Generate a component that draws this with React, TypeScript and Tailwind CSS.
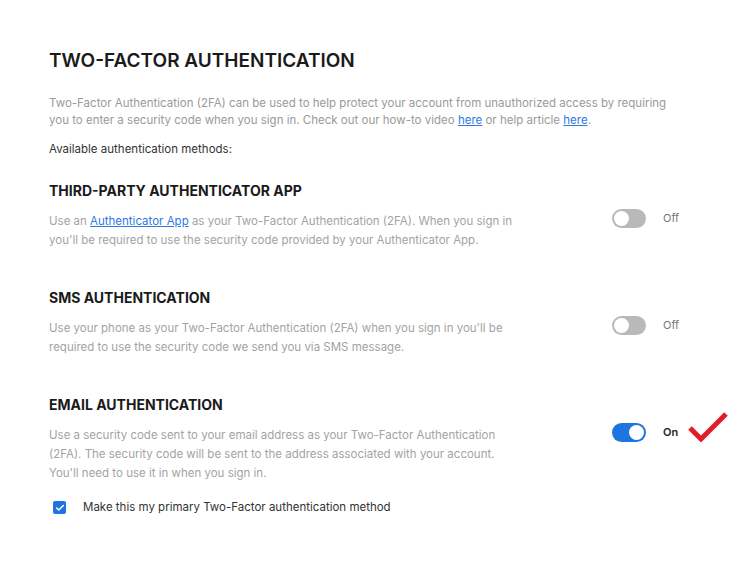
import { Check } from 'lucide-react'

type Method = {
  title: string
  desc: React.ReactNode
  on: boolean
}

function Toggle({ on }: { on: boolean }) {
  return (
    <div className="flex items-center gap-[17px]">
      <div
        className={
          on
            ? 'w-[34px] h-[19px] rounded-full bg-[#1f75e0] flex items-center justify-end px-[2px]'
            : 'w-[34px] h-[19px] rounded-full bg-[#b9b9b9] flex items-center justify-start px-[2px]'
        }
      >
        <div className="w-[15px] h-[15px] rounded-full bg-white" />
      </div>
      <span className={on ? 'text-[11px] font-semibold text-[#222]' : 'text-[11px] text-[#777]'}>
        {on ? 'On' : 'Off'}
      </span>
    </div>
  )
}

export default function App() {
  const methods: Method[] = [
    {
      title: 'THIRD-PARTY AUTHENTICATOR APP',
      desc: (
        <>
          Use an <a className="text-[#2f7ae5] underline">Authenticator App</a> as your Two-Factor Authentication (2FA). When you sign in
          you'll be required to use the security code provided by your Authenticator App.
        </>
      ),
      on: false,
    },
    {
      title: 'SMS AUTHENTICATION',
      desc: "Use your phone as your Two-Factor Authentication (2FA) when you sign in you'll be required to use the security code we send you via SMS message.",
      on: false,
    },
    {
      title: 'EMAIL AUTHENTICATION',
      desc: "Use a security code sent to your email address as your Two-Factor Authentication (2FA). The security code will be sent to the address associated with your account. You'll need to use it in when you sign in.",
      on: true,
    },
  ]

  return (
    <div className="min-h-screen bg-white font-['Inter',sans-serif] pl-[49px] pt-[48px]">
      <h1 className="text-[19px] font-semibold text-[#1a1a1a] leading-[26px]">TWO-FACTOR AUTHENTICATION</h1>

      <p className="mt-[21px] text-[11.5px] leading-[17px] text-[#9a9a9a] w-[640px]">
        Two-Factor Authentication (2FA) can be used to help protect your account from unauthorized access by requiring
        you to enter a security code when you sign in. Check out our how-to video{' '}
        <a className="text-[#2f7ae5] underline">here</a> or help article <a className="text-[#2f7ae5] underline">here</a>.
      </p>

      <p className="mt-[12px] text-[11.5px] leading-[17px] text-[#333]">Available authentication methods:</p>

      <div className="mt-[23px] flex flex-col gap-[38px]">
        {methods.map((m) => (
          <div key={m.title}>
            <h2 className="text-[14px] font-bold text-[#1a1a1a] leading-[20px]">{m.title}</h2>
            <div className="mt-[11px] flex items-start">
              <p className="w-[470px] text-[11.5px] leading-[19px] text-[#a3a3a3]">{m.desc}</p>
              <div className="ml-[93px] mt-[-3px] flex items-start">
                <Toggle on={m.on} />
                {m.on && (
                  <svg width="40" height="32" viewBox="0 0 40 32" className="ml-[10px] mt-[-12px] mb-[-12px]">
                    <path d="M2 17 L13 28 L38 3" fill="none" stroke="#e11d2a" strokeWidth="5" strokeLinejoin="miter" />
                  </svg>
                )}
              </div>
            </div>
          </div>
        ))}
      </div>

      <label className="mt-[16px] ml-[4px] flex items-center gap-[17px]">
        <span className="w-[13px] h-[13px] rounded-[2px] bg-[#1f75e0] flex items-center justify-center">
          <Check size={10} strokeWidth={3.5} className="text-white" />
        </span>
        <span className="text-[11.5px] text-[#333]">Make this my primary Two-Factor authentication method</span>
      </label>
    </div>
  )
}
